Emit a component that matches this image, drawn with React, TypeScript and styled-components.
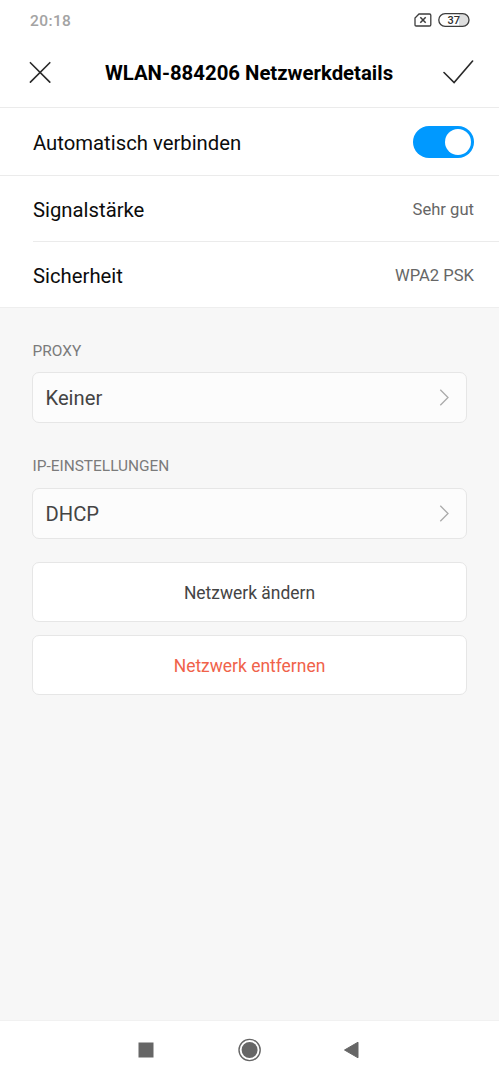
import React from "react";
import styled, { createGlobalStyle } from "styled-components";

const GlobalStyle = createGlobalStyle`
  *, *::before, *::after { box-sizing: border-box; }
  body { margin: 0; background: #f7f7f7; }
  button { font: inherit; border: 0; padding: 0; background: none; }
  svg { display: block; flex: none; }
`;

const Screen = styled.div`
  display: flex;
  flex-direction: column;
  width: 100%;
  height: 1080px;
  overflow: hidden;
  background: #f7f7f7;
  color: #0c0c0c;
  font-family: Roboto, "Liberation Sans", sans-serif;
`;

const StatusBar = styled.div`
  display: flex;
  flex: none;
  align-items: center;
  justify-content: space-between;
  height: 40px;
  padding: 0 29px 0 30px;
  background: #fff;
`;

const Clock = styled.span`
  padding-top: 2px;
  color: #a3a3a3;
  font-size: 15.5px;
  font-weight: 500;
  letter-spacing: 0.4px;
  line-height: 20px;
`;

const StatusIcons = styled.div`
  display: flex;
  align-items: center;
  gap: 6px;
`;

const Header = styled.header`
  display: flex;
  flex: none;
  align-items: center;
  justify-content: space-between;
  height: 68px;
  padding: 0 25px 3px 29px;
  border-bottom: 1px solid #ebebeb;
  background: #fff;
`;

const Title = styled.h1`
  flex: 1;
  margin: 0;
  padding: 2px 0 0 5px;
  color: #000;
  font-size: 20.35px;
  font-weight: 700;
  line-height: 24px;
  text-align: center;
  white-space: nowrap;
`;

const IconButton = styled.button`
  display: flex;
  flex: none;
`;

const List = styled.div`
  flex: none;
  background: #fff;
  border-bottom: 1px solid #eeeeee;
`;

const Row = styled.div<{ $height: number; $inset?: boolean }>`
  display: flex;
  align-items: center;
  justify-content: space-between;
  height: ${(p) => p.$height}px;
  margin-left: ${(p) => (p.$inset ? 33 : 0)}px;
  padding: 0 25px 0 ${(p) => (p.$inset ? 0 : 33)}px;
  & + & { border-top: 1px solid #ebebeb; }
`;

const Label = styled.span`
  font-size: 20.3px;
  line-height: 24px;
  padding-top: 2px;
`;

const Value = styled.span`
  color: #666;
  font-size: 16.6px;
  line-height: 20px;
  padding-top: 3px;
`;

const Toggle = styled.button`
  display: flex;
  align-items: center;
  justify-content: flex-end;
  width: 61px;
  height: 32px;
  padding: 3px;
  border-radius: 16px;
  background: #0099ff;
`;

const Knob = styled.span`
  width: 26px;
  height: 26px;
  border-radius: 50%;
  background: #fff;
`;

const Settings = styled.main`
  flex: 1;
  display: flex;
  flex-direction: column;
  padding: 32.5px 32px 0;
`;

const Caption = styled.h2`
  margin: 0 0 11.5px;
  padding-left: 0.5px;
  color: #7b7b7b;
  font-size: 15.45px;
  font-weight: 400;
  line-height: 20px;
`;

const Select = styled.button`
  display: flex;
  flex: none;
  align-items: center;
  justify-content: space-between;
  width: 435px;
  height: 51px;
  margin-bottom: 33px;
  padding: 1px 17px 0 12.5px;
  border: 1px solid #e6e6e6;
  border-radius: 7px;
  background: #fcfcfc;
  color: #444;
  font-size: 20.2px;
  text-align: left;
`;

const Actions = styled.div`
  display: flex;
  flex-direction: column;
  gap: 13px;
  margin-top: -9.5px;
`;

const ActionButton = styled.button<{ $danger?: boolean }>`
  width: 435px;
  height: 60px;
  padding-top: 2px;
  border: 1px solid #e6e6e6;
  border-radius: 7px;
  background: #fff;
  color: ${(p) => (p.$danger ? "#f0624a" : "#444")};
  font-size: 17.45px;
`;

const NavBar = styled.nav`
  display: flex;
  flex: none;
  align-items: center;
  justify-content: space-between;
  height: 60px;
  padding: 0 140px 2px 138px;
  border-top: 1px solid #f1f1f1;
  background: #fff;
`;

const NoSimIcon = () => (
  <svg width="18" height="14" viewBox="0 0 18 14" fill="none" stroke="#3d3d3d">
    <path d="M5 1H15.5Q16.8 1 16.8 2.2V11.8Q16.8 13 15.5 13H2.2Q1 13 1 11.8V5Z" strokeWidth="1.3" />
    <path d="M6.3 4.2L11.7 9.8M11.7 4.2L6.3 9.8" strokeWidth="1.5" />
  </svg>
);

const BatteryIcon = () => (
  <svg width="32" height="14" viewBox="0 0 32 14">
    <path d="M21 1H25A6 6 0 0 1 25 13H21Z" fill="#dedede" />
    <rect x="0.8" y="0.7" width="30.2" height="12.6" rx="6.3" fill="none" stroke="#3d3d3d" strokeWidth="1.3" />
    <text x="15.8" y="11" textAnchor="middle" fill="#303030" fontFamily="Roboto, sans-serif" fontSize="11" fontWeight="500">37</text>
  </svg>
);

const CloseIcon = () => (
  <svg width="22" height="22" viewBox="0 0 22 22" fill="none" stroke="#292929" strokeWidth="1.6" strokeLinecap="round">
    <path d="M1.4 1.7L20.8 21.1M20.8 1.7L1.4 21.1" />
  </svg>
);

const CheckIcon = () => (
  <svg width="32" height="24" viewBox="0 0 32 24" fill="none" stroke="#292929" strokeWidth="1.6" strokeLinecap="round">
    <path d="M2 12.5L12.1 22.6L30.6 1" />
  </svg>
);

const ChevronIcon = () => (
  <svg width="10" height="18" viewBox="0 0 10 18" fill="none" stroke="#aaa" strokeWidth="1.3">
    <path d="M1.3 0.8L9 8.5L1.3 16.2" />
  </svg>
);

const RecentsIcon = () => (
  <svg width="16" height="16" viewBox="0 0 16 16">
    <rect x="0.5" y="0.5" width="15" height="15" fill="#666" />
  </svg>
);

const HomeIcon = () => (
  <svg width="24" height="24" viewBox="0 0 24 24">
    <circle cx="12.6" cy="12" r="10.6" fill="none" stroke="#666" strokeWidth="1.4" />
    <circle cx="12.6" cy="12" r="8" fill="#666" />
  </svg>
);

const BackIcon = () => (
  <svg width="16" height="18" viewBox="0 0 16 18">
    <path d="M1.5 9L15 1.2V16.8Z" fill="#666" stroke="#666" strokeLinejoin="round" />
  </svg>
);

export default function App() {
  return (
    <Screen>
      <GlobalStyle />
      <StatusBar>
        <Clock>20:18</Clock>
        <StatusIcons>
          <NoSimIcon />
          <BatteryIcon />
        </StatusIcons>
      </StatusBar>
      <Header>
        <IconButton aria-label="Schließen"><CloseIcon /></IconButton>
        <Title>WLAN-884206 Netzwerkdetails</Title>
        <IconButton aria-label="Fertig"><CheckIcon /></IconButton>
      </Header>
      <List>
        <Row $height={67}>
          <Label>Automatisch verbinden</Label>
          <Toggle role="switch" aria-checked="true" aria-label="Automatisch verbinden"><Knob /></Toggle>
        </Row>
        <Row $height={66}>
          <Label>Signalstärke</Label>
          <Value>Sehr gut</Value>
        </Row>
        <Row $height={66} $inset>
          <Label>Sicherheit</Label>
          <Value>WPA2 PSK</Value>
        </Row>
      </List>
      <Settings>
        <Caption>PROXY</Caption>
        <Select>Keiner<ChevronIcon /></Select>
        <Caption>IP-EINSTELLUNGEN</Caption>
        <Select>DHCP<ChevronIcon /></Select>
        <Actions>
          <ActionButton>Netzwerk ändern</ActionButton>
          <ActionButton $danger>Netzwerk entfernen</ActionButton>
        </Actions>
      </Settings>
      <NavBar>
        <IconButton aria-label="Übersicht"><RecentsIcon /></IconButton>
        <IconButton aria-label="Startseite"><HomeIcon /></IconButton>
        <IconButton aria-label="Zurück"><BackIcon /></IconButton>
      </NavBar>
    </Screen>
  );
}
